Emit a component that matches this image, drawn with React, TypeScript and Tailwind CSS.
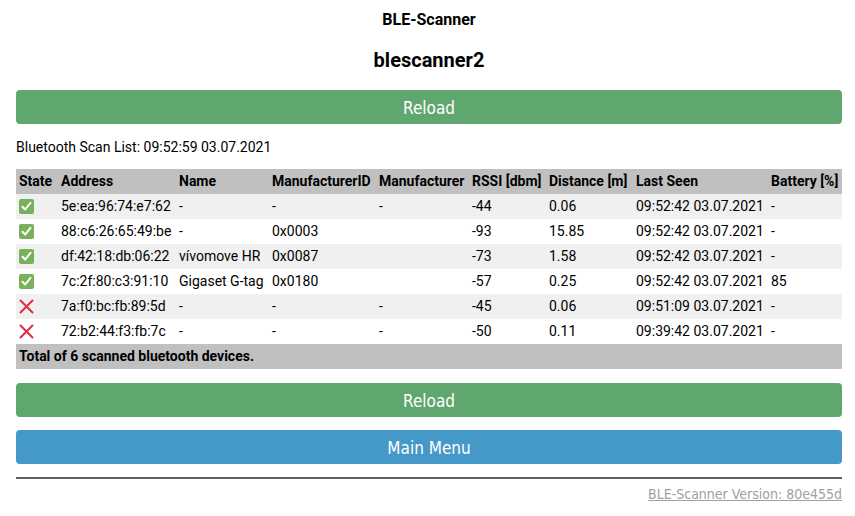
import React from 'react'

type Device = {
  ok: boolean
  addr: string
  name: string
  mid: string
  man: string
  rssi: string
  dist: string
  seen: string
  bat: string
}

const devices: Device[] = [
  { ok: true, addr: '5e:ea:96:74:e7:62', name: '-', mid: '-', man: '-', rssi: '-44', dist: '0.06', seen: '09:52:42 03.07.2021', bat: '-' },
  { ok: true, addr: '88:c6:26:65:49:be', name: '-', mid: '0x0003', man: '', rssi: '-93', dist: '15.85', seen: '09:52:42 03.07.2021', bat: '-' },
  { ok: true, addr: 'df:42:18:db:06:22', name: 'vívomove HR', mid: '0x0087', man: '', rssi: '-73', dist: '1.58', seen: '09:52:42 03.07.2021', bat: '-' },
  { ok: true, addr: '7c:2f:80:c3:91:10', name: 'Gigaset G-tag', mid: '0x0180', man: '', rssi: '-57', dist: '0.25', seen: '09:52:42 03.07.2021', bat: '85' },
  { ok: false, addr: '7a:f0:bc:fb:89:5d', name: '-', mid: '-', man: '-', rssi: '-45', dist: '0.06', seen: '09:51:09 03.07.2021', bat: '-' },
  { ok: false, addr: '72:b2:44:f3:fb:7c', name: '-', mid: '-', man: '-', rssi: '-50', dist: '0.11', seen: '09:39:42 03.07.2021', bat: '-' },
]

const cols = ['State', 'Address', 'Name', 'ManufacturerID', 'Manufacturer', 'RSSI [dbm]', 'Distance [m]', 'Last Seen', 'Battery [%]']
const widths = ['w-[42px]', 'w-[118px]', 'w-[93px]', 'w-[107px]', 'w-[93px]', 'w-[77px]', 'w-[87px]', 'w-[135px]', 'w-[74px]']

function Check() {
  return (
    <svg width="15" height="15" viewBox="0 0 15 15" className="block">
      <rect x="0" y="0" width="15" height="15" rx="2" fill="#78b159" />
      <path d="M3.5 7.8 L6.2 10.5 L11.5 3.8" fill="none" stroke="#fff" strokeWidth="2" strokeLinecap="round" strokeLinejoin="round" />
    </svg>
  )
}

function Cross() {
  return (
    <svg width="15" height="15" viewBox="0 0 15 15" className="block">
      <path d="M1.5 1.5 L13.5 13.5 M13.5 1.5 L1.5 13.5" fill="none" stroke="#dd2e44" strokeWidth="2" strokeLinecap="round" />
    </svg>
  )
}

function Button({ label, color }: { label: string; color: string }) {
  return (
    <div className={`h-[34px] rounded-[4px] ${color} flex items-center justify-center pt-[3px] leading-none text-white text-[17px] font-['Liberation_Sans_Narrow','DejaVu_Sans_Condensed',sans-serif]`}>
      {label}
    </div>
  )
}

export default function App() {
  return (
    <div className="w-[855px] h-[516px] bg-white pl-4 pr-[13px] text-black font-['Roboto',sans-serif] text-[14px]">
      <div className="pt-[10px] text-center font-bold text-[16px] leading-[20px]">BLE-Scanner</div>
      <div className="pt-[18px] text-center font-bold text-[20px] leading-[24px]">blescanner2</div>
      <div className="pt-[18px]">
        <Button label="Reload" color="bg-[#5fa66f]" />
      </div>
      <div className="pt-[14px] leading-[18px]">Bluetooth Scan List: 09:52:59 03.07.2021</div>
      <table className="mt-[13px] w-full table-fixed border-collapse">
        <thead>
          <tr className="bg-[#c0c0c0] h-[25px]">
            {cols.map((c, i) => (
              <th key={c} className={`${widths[i]} text-left font-bold pl-[3px] pr-0 whitespace-nowrap`}>{c}</th>
            ))}
          </tr>
        </thead>
        <tbody>
          {devices.map((d, i) => (
            <tr key={d.addr} className={`h-[25px] ${i % 2 === 0 ? 'bg-[#f0f0f0]' : 'bg-white'}`}>
              <td className="pl-[3px]">{d.ok ? <Check /> : <Cross />}</td>
              <td className="pl-[3px] whitespace-nowrap">{d.addr}</td>
              <td className="pl-[3px] whitespace-nowrap">{d.name}</td>
              <td className="pl-[3px]">{d.mid}</td>
              <td className="pl-[3px]">{d.man}</td>
              <td className="pl-[3px]">{d.rssi}</td>
              <td className="pl-[3px]">{d.dist}</td>
              <td className="pl-[3px] whitespace-nowrap">{d.seen}</td>
              <td className="pl-[3px]">{d.bat}</td>
            </tr>
          ))}
          <tr className="bg-[#c0c0c0] h-[25px]">
            <td colSpan={9} className="pl-[3px] font-bold">Total of 6 scanned bluetooth devices.</td>
          </tr>
        </tbody>
      </table>
      <div className="pt-[14px]">
        <Button label="Reload" color="bg-[#5fa66f]" />
      </div>
      <div className="pt-[13px]">
        <Button label="Main Menu" color="bg-[#4599c9]" />
      </div>
      <div className="mt-[13px] h-[2px] bg-[#606060]" />
      <div className="pt-[6px] text-right leading-[18px]">
        <span className="underline text-[#a0a0a0] text-[14px] font-['Liberation_Sans_Narrow','DejaVu_Sans_Condensed',sans-serif]">BLE-Scanner Version: 80e455d</span>
      </div>
    </div>
  )
}
